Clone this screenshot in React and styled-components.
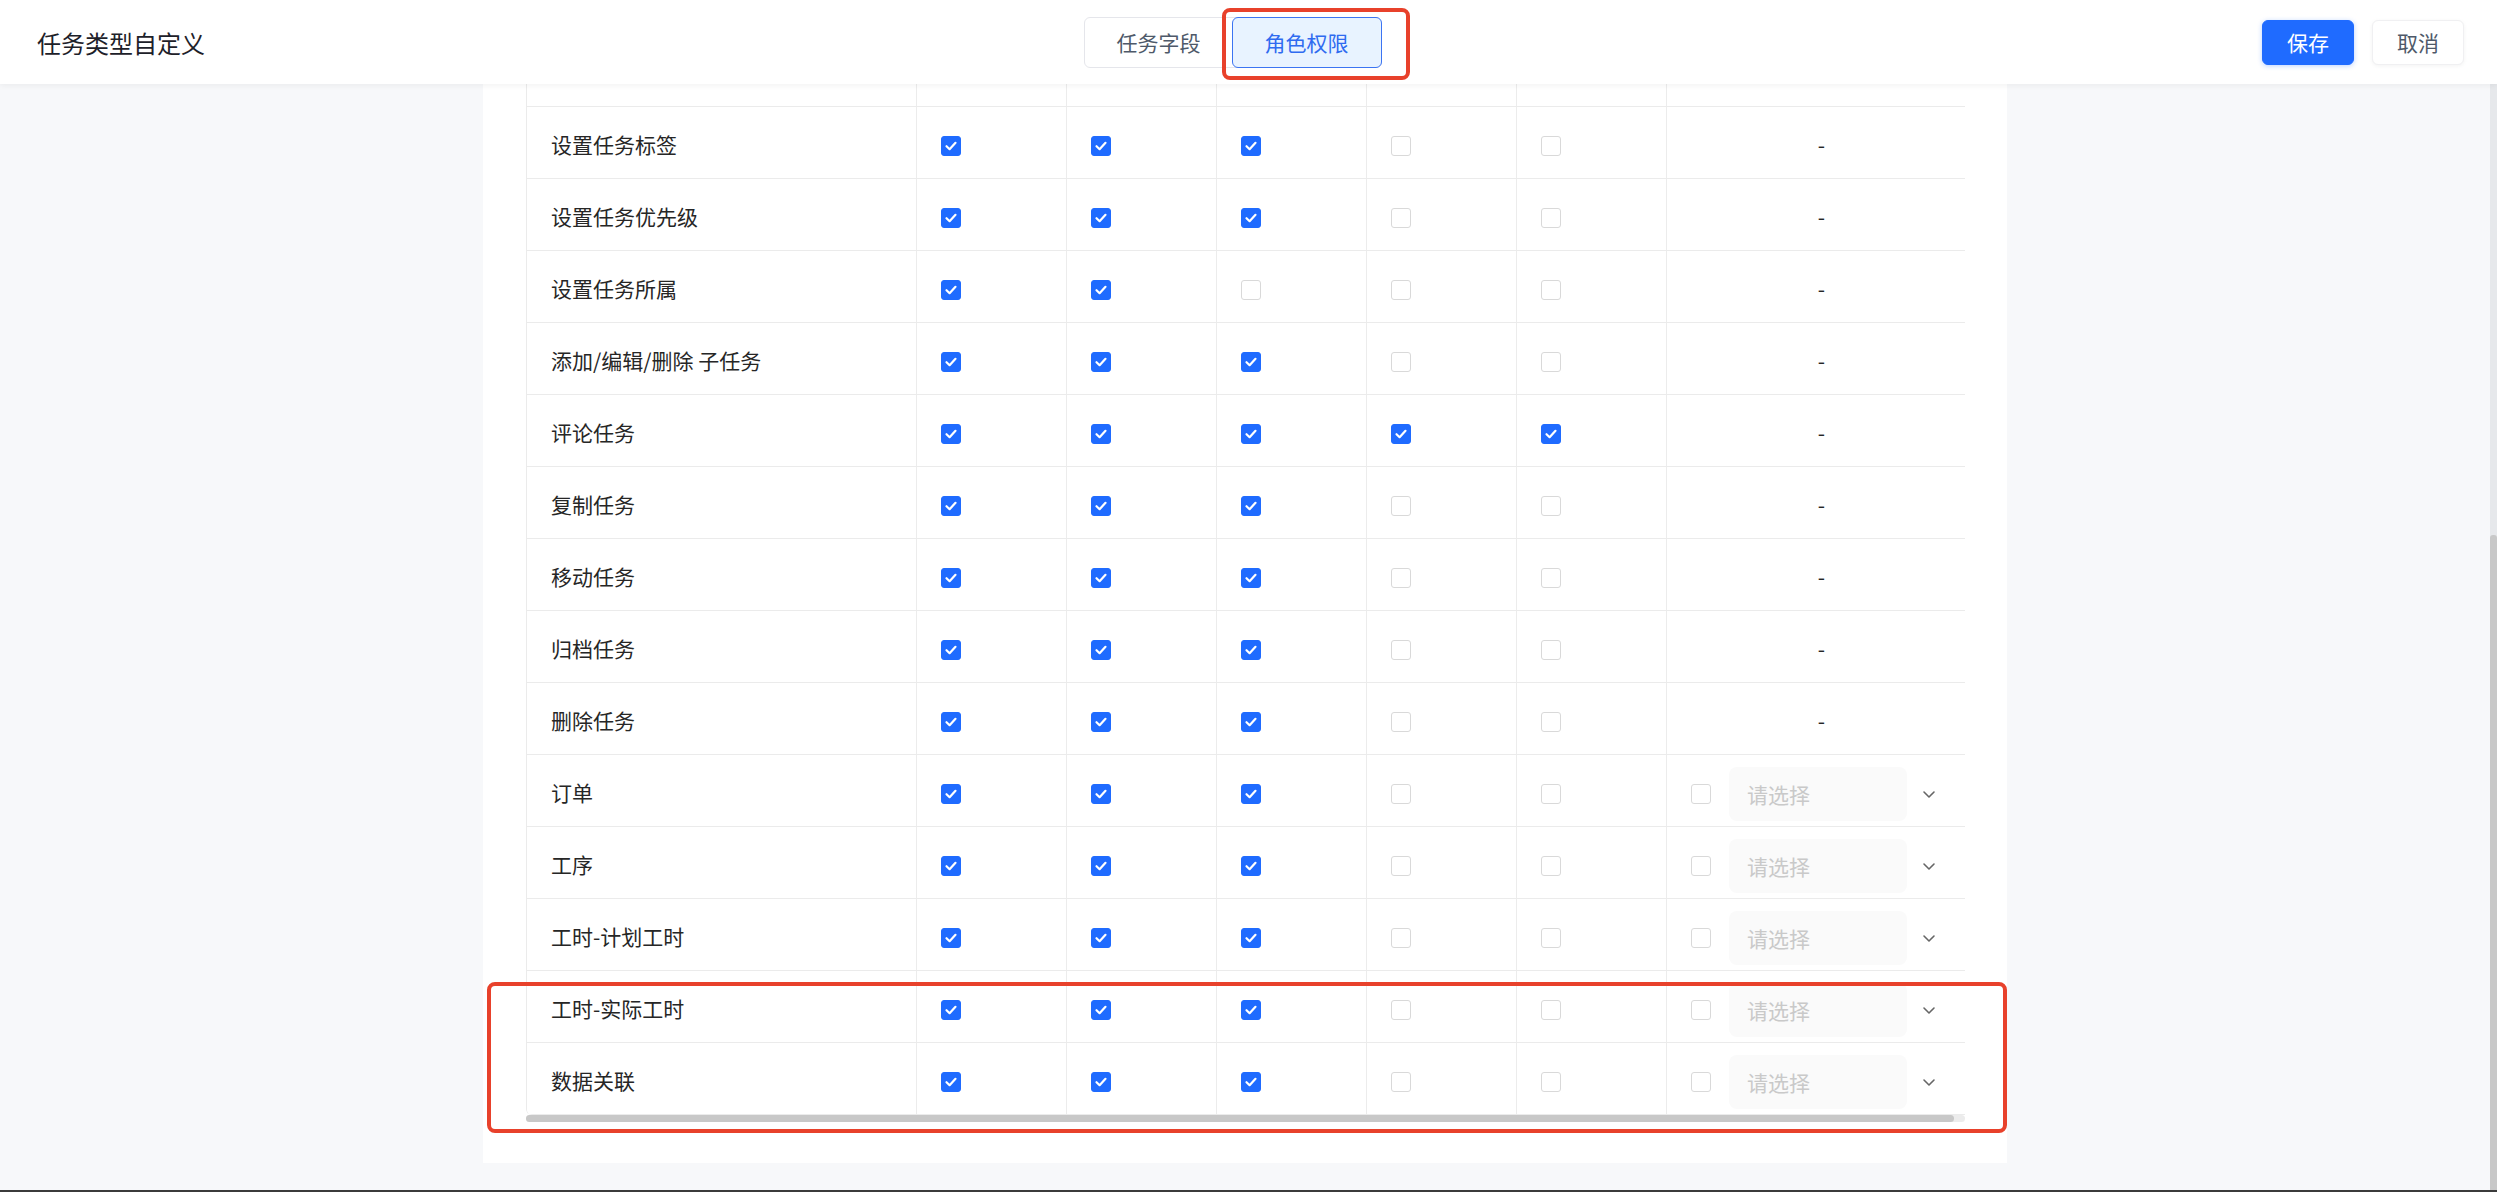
import styled, {createGlobalStyle} from 'styled-components'
import {useLayoutEffect, useRef, useState} from 'react'

const GlobalStyle = createGlobalStyle`
  html, body {
    margin: 0;
    padding: 0;
    overflow: hidden;
    background: #f7f8fa;
    font-family: "Noto Sans CJK SC", "Noto Sans", "Liberation Sans", sans-serif;
  }
  * { box-sizing: border-box; }
`

const Shell = styled.div`
  height: 100vh;
  display: flex;
  flex-direction: column;
  border-bottom: 2px solid #3b3b3b;
  background: #f7f8fa;
`

const Header = styled.header`
  position: relative;
  z-index: 2;
  height: 84px;
  flex: none;
  display: grid;
  grid-template-columns: 1fr auto 1fr;
  align-items: center;
  padding: 0 33px 0 37px;
  background: #fff;
  box-shadow: 0 2px 6px rgba(0, 0, 0, 0.05);
`

const Title = styled.h1`
  margin: 0;
  font-size: 24px;
  font-weight: 400;
  color: #1d2129;
`

const TabGroup = styled.div`
  display: flex;
  margin-right: 36px;
  border: 1px solid #e5e6eb;
  border-radius: 6px;
  background: #fff;
`

const Tab = styled.div`
  width: 150px;
  height: 51px;
  margin: -1px;
  display: flex;
  align-items: center;
  justify-content: center;
  font-size: 21px;
  border-radius: 6px;
  border: 1px solid ${props => props.active ? '#3b74f2' : 'transparent'};
  background: ${props => props.active ? '#e8f3ff' : 'transparent'};
  color: ${props => props.active ? '#2f6bf0' : '#4e5969'};
`

const Actions = styled.div`
  display: flex;
  justify-content: flex-end;
  gap: 18px;
`

const Button = styled.button`
  width: 92px;
  height: 45px;
  border-radius: 6px;
  font-family: inherit;
  font-size: 21px;
  cursor: pointer;
  border: 1px solid ${props => props.primary ? '#1f6bff' : '#f0f0f2'};
  background: ${props => props.primary ? '#1f6bff' : '#fff'};
  color: ${props => props.primary ? '#fff' : '#4e5969'};
  box-shadow: ${props => props.primary ? '0 1px 5px rgba(31, 107, 255, 0.3)' : '0 1px 4px rgba(0, 0, 0, 0.05)'};
`

const Mark = styled.div`
  position: absolute;
  border: 4px solid #e8412b;
  border-radius: 8px;
  pointer-events: none;
`

const HeaderMark = styled(Mark)`
  left: 1222px;
  top: 8px;
  width: 188px;
  height: 72px;
`

const Body = styled.div`
  flex: 1;
  min-height: 0;
  display: flex;
`

const Viewport = styled.main`
  flex: 1;
  overflow: hidden;
  padding: 22px 0 27px;
`

const VTrack = styled.div`
  width: 7px;
  flex: none;
  background: #e6e8eb;
`

const VThumb = styled.div`
  width: 7px;
  background: #c8c8c8;
  border-radius: 3px 3px 0 0;
`

const Panel = styled.section`
  position: relative;
  width: 1524px;
  margin: 0 auto;
  padding: 42px 42px 41px 43px;
  background: #fff;
`

const TableMark = styled(Mark)`
  left: 4px;
  right: 0;
  bottom: 30px;
  height: 151px;
`

const TableScroll = styled.div`
  overflow: hidden;
  border-left: 1px solid #ebebeb;
  border-bottom-left-radius: 6px;
`

const HTrack = styled.div`
  height: 7px;
  border-radius: 4px;
  background: #ececec;
`

const HThumb = styled.div`
  height: 7px;
  border-radius: 4px;
  background: #c8c8c8;
`

const Row = styled.div`
  width: 1449px;
  height: 72px;
  display: grid;
  grid-template-columns: 390px repeat(5, 150px) 309px;
  border-bottom: 1px solid #ebebeb;
  background: ${props => props.head ? '#fafafa' : '#fff'};
`

const Cell = styled.div`
  display: flex;
  align-items: center;
  padding: ${props => props.label ? '2px' : '6px'} 0 0 24px;
  font-size: 21px;
  color: #262626;
  border-right: ${props => props.last ? 'none' : '1px solid #ececec'};
  justify-content: ${props => props.center ? 'center' : 'flex-start'};
  ${props => props.center && 'padding-left: 0;'}
  ${props => props.head && 'font-weight: 500;'}
`

const Box = styled.span`
  width: 20px;
  height: 20px;
  flex: none;
  display: inline-flex;
  align-items: center;
  justify-content: center;
  border-radius: 3px;
  border: 1px solid ${props => props.checked ? '#1f6bff' : '#d9d9d9'};
  background: ${props => props.checked ? '#1f6bff' : '#fff'};
`

const Select = styled.div`
  width: 178px;
  height: 54px;
  margin-left: 18px;
  padding-left: 18px;
  display: flex;
  align-items: center;
  border-radius: 8px;
  background: #fafafa;
  color: #c9c9c9;
  font-size: 21px;
`

const Chevron = styled.svg`
  margin-left: 14px;
  flex: none;
`

const Checkbox = ({checked}) => (
    <Box checked={checked}>
        {checked &&
            <svg width="14" height="14" viewBox="0 0 14 14">
                <polyline points="2.5,7.2 5.6,10.2 11.5,3.8" fill="none" stroke="#fff" strokeWidth="2.2" strokeLinecap="round" strokeLinejoin="round"/>
            </svg>
        }
    </Box>
)

const columns = ['权限项', '负责人', '创建者', '项目管理员', '参与者', '其他成员', '字段设置']

const rows = [
    ['查看任务', [1, 1, 1, 1, 1], 'dash'],
    ['编辑任务标题', [1, 1, 1, 0, 0], 'dash'],
    ['编辑任务描述', [1, 1, 1, 0, 0], 'dash'],
    ['设置负责人', [1, 1, 1, 0, 0], 'dash'],
    ['设置参与者', [1, 1, 1, 0, 0], 'dash'],
    ['设置开始时间', [1, 1, 1, 0, 0], 'dash'],
    ['设置截止时间', [1, 1, 1, 0, 0], 'dash'],
    ['设置任务状态', [1, 1, 1, 0, 0], 'dash'],
    ['上传附件', [1, 1, 1, 0, 0], 'dash'],
    ['设置任务标签', [1, 1, 1, 0, 0], 'dash'],
    ['设置任务优先级', [1, 1, 1, 0, 0], 'dash'],
    ['设置任务所属', [1, 1, 0, 0, 0], 'dash'],
    ['添加/编辑/删除 子任务', [1, 1, 1, 0, 0], 'dash'],
    ['评论任务', [1, 1, 1, 1, 1], 'dash'],
    ['复制任务', [1, 1, 1, 0, 0], 'dash'],
    ['移动任务', [1, 1, 1, 0, 0], 'dash'],
    ['归档任务', [1, 1, 1, 0, 0], 'dash'],
    ['删除任务', [1, 1, 1, 0, 0], 'dash'],
    ['订单', [1, 1, 1, 0, 0], 'select'],
    ['工序', [1, 1, 1, 0, 0], 'select'],
    ['工时-计划工时', [1, 1, 1, 0, 0], 'select'],
    ['工时-实际工时', [1, 1, 1, 0, 0], 'select'],
    ['数据关联', [1, 1, 1, 0, 0], 'select'],
]

const FieldCell = ({kind}) => {
    if (kind === 'dash') {
        return <Cell last center label>-</Cell>
    }
    return (
        <Cell last>
            <Checkbox checked={false}/>
            <Select>请选择</Select>
            <Chevron width="16" height="16" viewBox="0 0 16 16">
                <polyline points="3,6 8,11 13,6" fill="none" stroke="#666" strokeWidth="1.6" strokeLinecap="round" strokeLinejoin="round"/>
            </Chevron>
        </Cell>
    )
}

const App = () => {
    const viewRef = useRef(null)
    const tableRef = useRef(null)
    const [vBar, setVBar] = useState({top: 0, height: 0})
    const [hBar, setHBar] = useState(100)

    useLayoutEffect(() => {
        const view = viewRef.current
        const table = tableRef.current
        if (view) {
            view.scrollTop = view.scrollHeight
            const ratio = view.clientHeight / view.scrollHeight
            setVBar({
                top: view.scrollTop * ratio,
                height: view.clientHeight * ratio,
            })
        }
        if (table) {
            setHBar(table.clientWidth / table.scrollWidth * 100)
        }
    }, [])

    return (
        <Shell>
            <GlobalStyle/>
            <Header>
                <Title>任务类型自定义</Title>
                <TabGroup>
                    <Tab>任务字段</Tab>
                    <Tab active>角色权限</Tab>
                </TabGroup>
                <Actions>
                    <Button primary>保存</Button>
                    <Button>取消</Button>
                </Actions>
                <HeaderMark/>
            </Header>
            <Body>
                <Viewport ref={viewRef}>
                    <Panel>
                        <TableScroll ref={tableRef}>
                            <Row head>
                                {columns.map((c, i) => (
                                    <Cell key={c} head label last={i === columns.length - 1}>{c}</Cell>
                                ))}
                            </Row>
                            {rows.map(([label, checks, kind]) => (
                                <Row key={label}>
                                    <Cell label>{label}</Cell>
                                    {checks.map((on, i) => (
                                        <Cell key={i}><Checkbox checked={!!on}/></Cell>
                                    ))}
                                    <FieldCell kind={kind}/>
                                </Row>
                            ))}
                        </TableScroll>
                        <HTrack>
                            <HThumb style={{width: `${hBar}%`}}/>
                        </HTrack>
                        <TableMark/>
                    </Panel>
                </Viewport>
                <VTrack>
                    <VThumb style={{marginTop: vBar.top, height: vBar.height}}/>
                </VTrack>
            </Body>
        </Shell>
    )
}

export default App
